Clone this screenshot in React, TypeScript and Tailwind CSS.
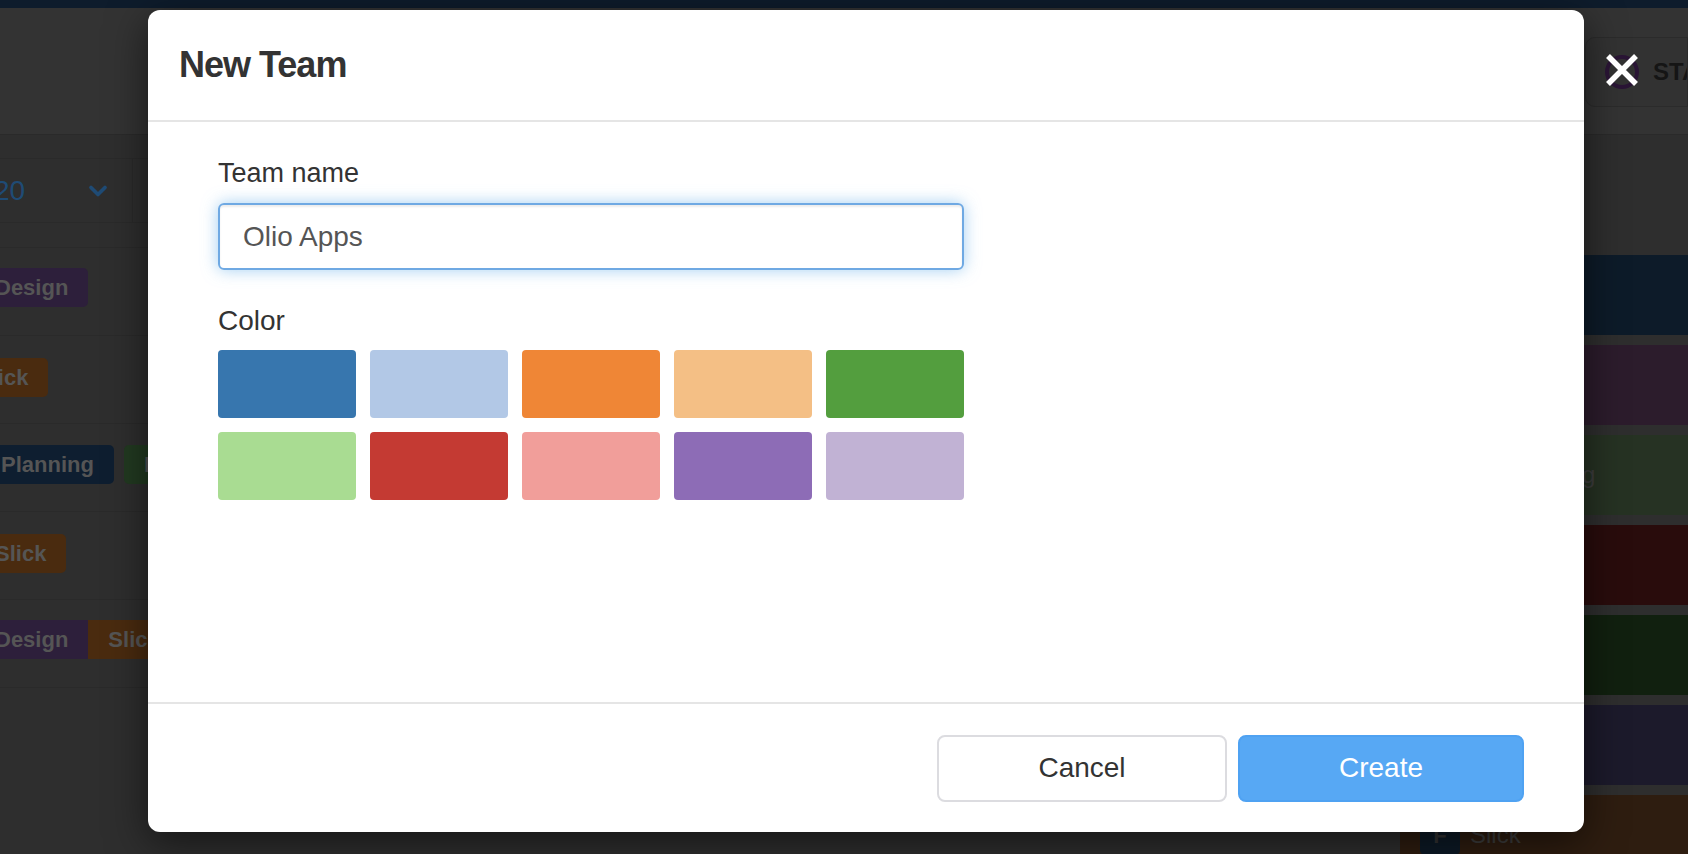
import { ChevronDown } from "lucide-react";

const swatches = [
  "#3776ae",
  "#b2c8e6",
  "#ef8636",
  "#f4bf85",
  "#539e3e",
  "#a9dc92",
  "#c43a33",
  "#f19e9a",
  "#8d6cb6",
  "#c1b2d4",
];

// dimmed board rows behind the overlay
const boardRows = [
  { offset: "-ml-[25px] pt-[20px]", tags: [{ label: "Design", bg: "bg-[#2d1f3b]" }] },
  { offset: "-ml-[43px] pt-[22px]", tags: [{ label: "Slick", bg: "bg-[#4a2b0f]" }] },
  {
    offset: "-ml-[19px] pt-[21px]",
    tags: [
      { label: "Planning", bg: "bg-[#0e1e30]" },
      { label: "Design", bg: "bg-[#223a21]" },
    ],
  },
  { offset: "-ml-[25px] pt-[22px]", tags: [{ label: "Slick", bg: "bg-[#4a2b0f]" }] },
];

const sideRows = [
  { bg: "bg-[#0d1b29]", title: "Design", pad: "ml-[10px]" },
  { bg: "bg-[#2c1c2c]", title: "Design", pad: "ml-[10px]" },
  { bg: "bg-[#263223]", title: "Planning", pad: "ml-[42px]" },
  { bg: "bg-[#290c0c]", title: "Bugs", pad: "ml-[10px]" },
  { bg: "bg-[#11200f]", title: "Backend", pad: "ml-[10px]" },
  { bg: "bg-[#1c1a2b]", title: "Design", pad: "ml-[10px]" },
  { bg: "bg-[#2e1d10]", title: "Slick", pad: "ml-[10px]" },
];

function Tag({ label, bg, className = "" }: { label: string; bg: string; className?: string }) {
  return (
    <span
      className={`flex h-[39px] shrink-0 items-center whitespace-nowrap px-[20px] text-[22px] font-bold text-[#555] ${bg} ${className}`}
    >
      {label}
    </span>
  );
}

function Board() {
  return (
    <div className="min-w-0 flex-1">
      <div className="h-[127px] border-b border-[#2a2a2a] bg-[#333]" />
      <div className="h-[113px] border-b border-[#2a2a2a] pt-[23px]">
        <div className="flex h-[65px] border-y border-[#2a2a2a]">
          <div className="flex w-[133px] items-center justify-between border-r border-[#2a2a2a] pr-[20px]">
            <span className="-ml-[6px] text-[28px] text-[#1f4b75]">20</span>
            <ChevronDown className="h-[28px] w-[28px] text-[#1f4b75]" strokeWidth={3.2} />
          </div>
        </div>
      </div>
      {boardRows.map((row, i) => (
        <div key={i} className="flex h-[88px] items-start border-b border-[#2a2a2a]">
          <div className={`flex gap-[10px] ${row.offset}`}>
            {row.tags.map((t, j) => (
              <Tag key={j} label={t.label} bg={t.bg} className="rounded-[5px]" />
            ))}
          </div>
        </div>
      ))}
      <div className="flex h-[88px] items-start border-b border-[#2a2a2a] pt-[20px]">
        <div className="-ml-[25px] flex">
          <Tag label="Design" bg="bg-[#2d1f3b]" className="rounded-l-[5px]" />
          <Tag label="Slick" bg="bg-[#4a2b0f]" className="rounded-r-[5px]" />
        </div>
      </div>
    </div>
  );
}

function Sidebar() {
  return (
    <div className="w-[288px] shrink-0">
      <div className="h-[127px] border-b border-[#2a2a2a] bg-[#333] pl-[185px] pt-[29px]">
        <div className="flex h-[70px] items-center overflow-hidden rounded-l-[10px] border border-[#2b2b2b] bg-[#323232] pl-[19px]">
          <span className="h-[34px] w-[34px] shrink-0 rounded-full border-[4px] border-[#2a1535]" />
          <span className="ml-[14px] shrink-0 whitespace-nowrap text-[24px] font-bold text-[#151515]">
            STATUS
          </span>
        </div>
      </div>
      <div className="flex flex-col gap-[10px] pt-[120px]">
        {sideRows.map((r, i) => (
          <div key={i} className={`flex h-[80px] items-center pl-[20px] ${r.bg}`}>
            <span className="flex h-[40px] w-[40px] shrink-0 items-center justify-center rounded-[5px] bg-[#0d1a26] text-[22px] font-bold text-[#333]">
              F
            </span>
            <span className={`whitespace-nowrap text-[24px] text-[#3d3d3d] ${r.pad}`}>{r.title}</span>
          </div>
        ))}
      </div>
    </div>
  );
}

function TeamModal() {
  return (
    <>
      <div className="absolute left-[148px] top-[10px] flex h-[822px] w-[1436px] flex-col rounded-[12px] bg-white shadow-[0_10px_40px_rgba(0,0,0,0.55)]">
        <div className="flex h-[112px] items-center border-b-2 border-[#e5e5e5] px-[31px]">
          <h2 className="text-[36px] font-semibold tracking-[-1px] text-[#333]">New Team</h2>
        </div>

        <div className="flex-1 pl-[70px] pt-[31px]">
          <div className="w-[746px]">
            <label className="mb-[10px] block text-[27px] leading-[40px] text-[#333]">Team name</label>
            <input
              defaultValue="Olio Apps"
              className="block h-[67px] w-full rounded-[6px] border-2 border-[#6fa9e3] px-[23px] text-[28px] text-[#555] shadow-[inset_0_2px_2px_rgba(0,0,0,0.075),0_0_16px_rgba(102,175,233,0.6)] outline-none"
            />
            <div className="mb-[9px] mt-[31px] text-[28px] leading-[40px] text-[#333]">Color</div>
            <div className="grid grid-cols-5 gap-[14px]">
              {swatches.map((c) => (
                <button key={c} className="h-[68px] rounded-[4px]" style={{ backgroundColor: c }} />
              ))}
            </div>
          </div>
        </div>

        <div className="flex h-[130px] items-center justify-end gap-[11px] border-t-2 border-[#e5e5e5] pr-[60px]">
          <button className="h-[67px] w-[290px] rounded-[8px] border-2 border-[#dcdce0] bg-white text-[28px] text-[#333]">
            Cancel
          </button>
          <button className="h-[67px] w-[286px] rounded-[8px] border-2 border-[#4fa2f2] bg-[#57a8f4] text-[28px] text-white">
            Create
          </button>
        </div>
      </div>

      <button className="absolute left-[1605px] top-[53px] h-[34px] w-[34px]" aria-label="Close">
        <svg viewBox="0 0 34 34" className="h-full w-full">
          <path d="M3 3L31 31M31 3L3 31" stroke="#fff" strokeWidth={5.5} />
        </svg>
      </button>
    </>
  );
}

export default function App() {
  return (
    <div className="relative h-[854px] w-[1688px] overflow-hidden bg-[#2e2e2e] font-['Liberation_Sans',Arial,sans-serif]">
      <div className="h-2 bg-[#0e1c2c]" />
      <div className="flex h-[846px]">
        <Board />
        <Sidebar />
      </div>
      <TeamModal />
    </div>
  );
}
